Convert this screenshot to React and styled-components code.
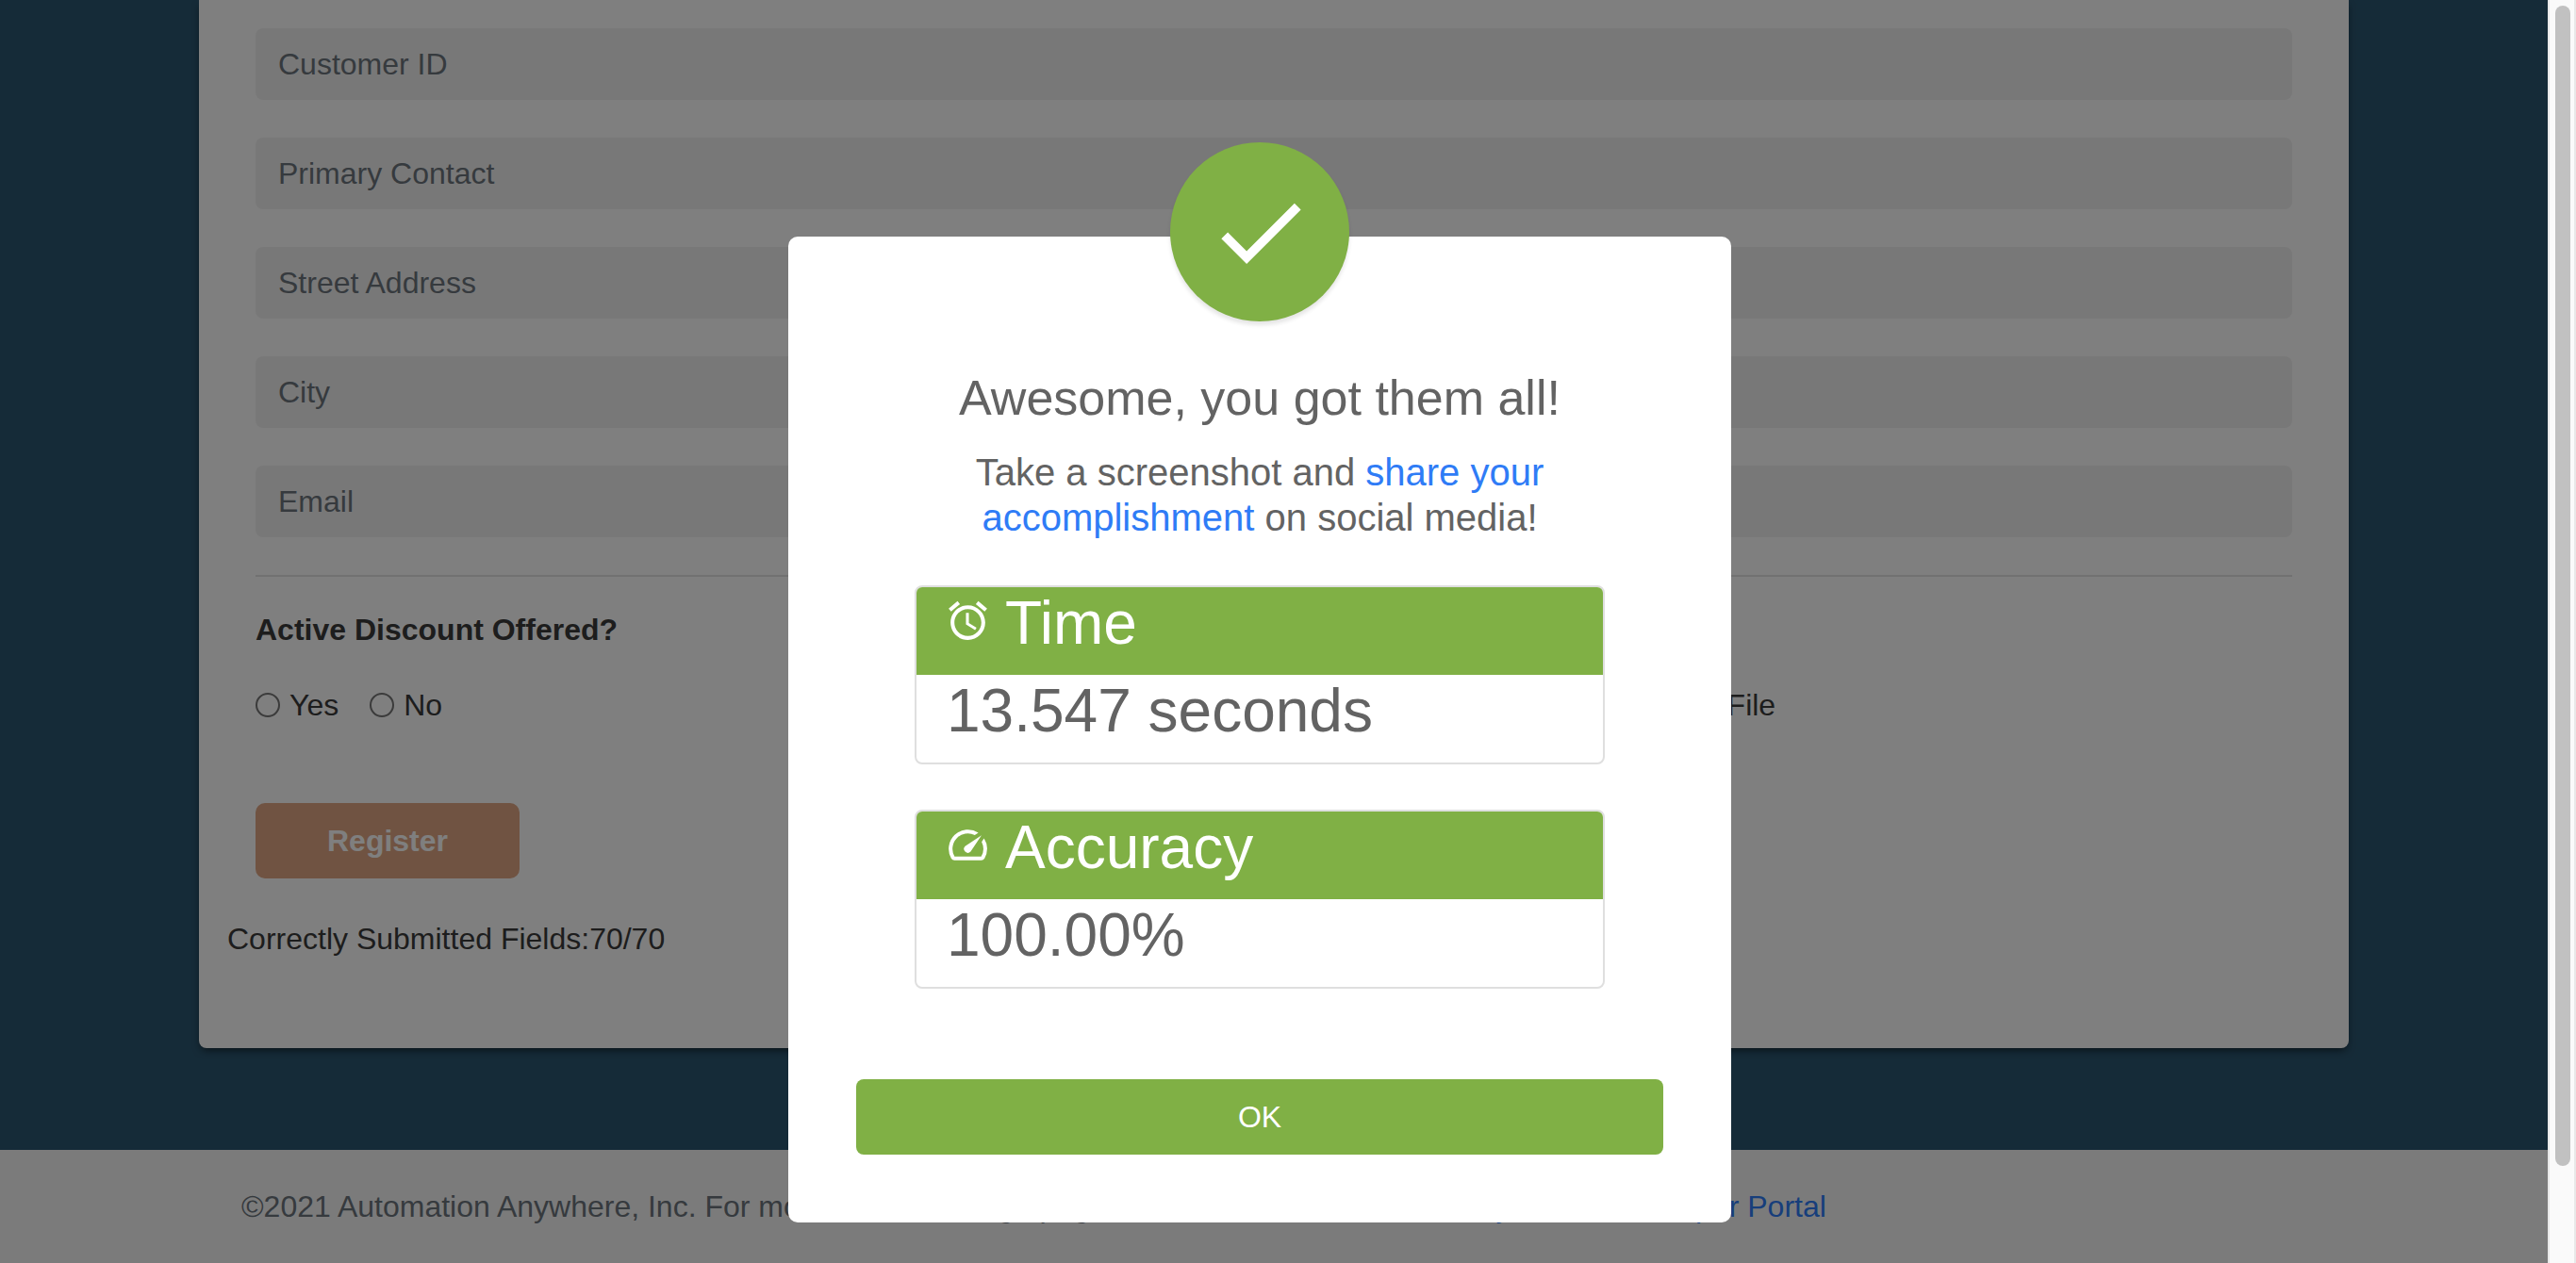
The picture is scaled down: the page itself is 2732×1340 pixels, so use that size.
import React from "react";
import styled, { createGlobalStyle } from "styled-components";

const GlobalStyle = createGlobalStyle`
  *, *::before, *::after { box-sizing: border-box; }
  body {
    margin: 0;
    font-family: "Liberation Sans", Arial, Helvetica, sans-serif;
    font-size: 32px;
    line-height: 48px;
    color: #3a3a3a;
  }
`;

const Screen = styled.div`
  display: grid;
  grid-template-columns: 1fr 30px;
  height: 100vh;
  overflow: hidden;
`;

const Viewport = styled.div`
  position: relative;
  overflow: hidden;
  display: flex;
  flex-direction: column;
`;

const Page = styled.main`
  background: #2b5670;
  padding: 0 60px 108px;
`;

const Card = styled.section`
  max-width: 2280px;
  margin: 0 auto;
  padding: 30px 30px 92px;
  background: #fff;
  border-radius: 0 0 8px 8px;
  box-shadow: 0 4px 8px -2px rgba(0, 0, 0, 0.6);
`;

const Form = styled.form`
  padding: 0 30px;
`;

const Fields = styled.div`
  display: flex;
  flex-direction: column;
  gap: 40px;
`;

const TextField = styled.input`
  width: 100%;
  height: 76px;
  padding: 0 24px;
  border: 0;
  border-radius: 8px;
  background: #f1f1f1;
  font: inherit;
  color: #495057;

  &::placeholder {
    color: #6c757d;
    opacity: 1;
  }
`;

const Divider = styled.hr`
  height: 2px;
  margin: 40px 0 32px;
  border: 0;
  background: #e3e3e3;
`;

const Question = styled.div`
  display: grid;
  grid-template-columns: 2fr 1fr;
  align-items: end;
`;

const OptionGroup = styled.fieldset`
  margin: 0;
  padding: 0;
  border: 0;
`;

const GroupTitle = styled.legend`
  margin-bottom: 32px;
  padding: 0;
  font-weight: 700;
`;

const Options = styled.div`
  display: flex;
  gap: 33px;
  padding-left: ${(p) => (p.$indent ? "33px" : "0")};
`;

const Option = styled.label`
  display: flex;
  align-items: center;
  gap: 10px;
`;

const Tick = styled.input`
  appearance: none;
  width: 26px;
  height: 26px;
  margin: 0;
  border: 2px solid #767676;
  border-radius: ${(p) => (p.type === "radio" ? "50%" : "4px")};
  background: #fff;
`;

const RegisterButton = styled.button`
  display: block;
  width: 280px;
  height: 80px;
  margin: 80px 0 40px;
  border: 0;
  border-radius: 10px;
  background: #e0a785;
  color: #fff;
  font: inherit;
  font-weight: 700;
`;

const Result = styled.p`
  margin: 0;
`;

const Footer = styled.footer`
  flex: 1;
  padding: 36px 60px;
  border-bottom: 1px solid #ececec;
  background: #f7f7f7;
  color: #6c757d;
  white-space: nowrap;
`;

const FooterInner = styled.div`
  max-width: 2280px;
  margin: 0 auto;
  padding: 0 45px;
`;

const Link = styled.a`
  color: #2f7cf6;
  text-decoration: none;
`;

const Backdrop = styled.div`
  position: absolute;
  inset: 0;
  display: flex;
  justify-content: center;
  align-items: flex-start;
  padding: 251px 30px 0 0;
  background: rgba(0, 0, 0, 0.5);
`;

const Dialog = styled.div`
  position: relative;
  width: 1000px;
  padding: 140px 72px 72px;
  border-radius: 10px;
  background: #fff;
  color: #636363;
`;

const Badge = styled.div`
  position: absolute;
  top: -100px;
  left: 50%;
  width: 190px;
  height: 190px;
  margin-left: -95px;
  display: grid;
  place-items: center;
  border-radius: 50%;
  background: #80b045;
  color: #fff;
  box-shadow: 0 4px 4px rgba(0, 0, 0, 0.1);
`;

const DialogTitle = styled.h1`
  margin: 0;
  font-size: 52px;
  line-height: 62px;
  font-weight: 400;
  text-align: center;
`;

const Message = styled.p`
  max-width: 640px;
  margin: 24px auto 48px;
  font-size: 40px;
  line-height: 48px;
  text-align: center;
`;

const Stats = styled.div`
  display: flex;
  flex-direction: column;
  gap: 48px;
  padding: 0 62px;
`;

const StatCard = styled.section`
  overflow: hidden;
  border: 2px solid #dfdfdf;
  border-radius: 8px;
`;

const StatTitle = styled.h2`
  display: flex;
  align-items: flex-start;
  gap: 15px;
  height: 93px;
  margin: 0;
  padding: 0 30px;
  background: #80b045;
  color: #fff;
  font-size: 64px;
  line-height: 77px;
  font-weight: 400;

  svg {
    margin-top: 11px;
  }
`;

const StatValue = styled.p`
  height: 93px;
  margin: 0;
  padding: 0 32px;
  font-size: 64px;
  line-height: 77px;
`;

const OkButton = styled.button`
  display: block;
  width: 100%;
  height: 80px;
  margin-top: 96px;
  border: 0;
  border-radius: 8px;
  background: #80b045;
  color: #fff;
  font: inherit;
`;

const Track = styled.div`
  display: flex;
  padding: 6px 4px 0 6px;
  border: solid #e8e8e8;
  border-width: 0 2px;
  background: #fafafa;
`;

const Thumb = styled.div`
  width: 16px;
  height: 92.3%;
  border-radius: 8px;
  background: #c1c1c1;
`;

const CheckIcon = () => (
  <svg width="115" height="115" viewBox="0 0 24 24" fill="currentColor" aria-hidden="true">
    <path d="M9 16.17 4.83 12l-1.42 1.41L9 19 21 7l-1.41-1.41z" />
  </svg>
);

const AlarmIcon = () => (
  <svg width="49" height="49" viewBox="0 0 24 24" fill="currentColor" aria-hidden="true">
    <path d="M22 5.72l-4.6-3.86-1.29 1.53 4.6 3.86L22 5.72zM7.88 3.39L6.6 1.86 2 5.71l1.29 1.53 4.59-3.85zM12.5 8H11v6l4.75 2.85.75-1.23-4-2.37V8zM12 4c-4.97 0-9 4.03-9 9s4.02 9 9 9c4.97 0 9-4.03 9-9s-4.03-9-9-9zm0 16c-3.87 0-7-3.13-7-7s3.13-7 7-7 7 3.13 7 7-3.13 7-7 7z" />
  </svg>
);

const SpeedIcon = () => (
  <svg width="49" height="49" viewBox="0 0 24 24" fill="currentColor" aria-hidden="true">
    <path d="M20.38 8.57l-1.23 1.85a8 8 0 0 1-.22 7.58H5.07A8 8 0 0 1 15.58 6.85l1.85-1.23A10 10 0 0 0 3.35 19a2 2 0 0 0 1.72 1h13.85a2 2 0 0 0 1.74-1 10 10 0 0 0-.27-10.44zm-9.79 6.84a2 2 0 0 0 2.83 0l5.66-8.49-8.49 5.66a2 2 0 0 0 0 2.83z" />
  </svg>
);

const fields = ["Customer ID", "Primary Contact", "Street Address", "City", "Email"];

const stats = [
  { title: "Time", value: "13.547 seconds", Icon: AlarmIcon },
  { title: "Accuracy", value: "100.00%", Icon: SpeedIcon },
];

export default function App() {
  return (
    <Screen>
      <GlobalStyle />
      <Viewport>
        <Page>
          <Card>
            <Form>
              <Fields>
                {fields.map((name) => (
                  <TextField key={name} type="text" placeholder={name} aria-label={name} />
                ))}
              </Fields>
              <Divider />
              <Question>
                <OptionGroup>
                  <GroupTitle>Active Discount Offered?</GroupTitle>
                  <Options>
                    <Option>
                      <Tick type="radio" name="discount" />
                      Yes
                    </Option>
                    <Option>
                      <Tick type="radio" name="discount" />
                      No
                    </Option>
                  </Options>
                </OptionGroup>
                <Options $indent>
                  <Option>
                    <Tick type="checkbox" />
                    On File
                  </Option>
                </Options>
              </Question>
              <RegisterButton type="button">Register</RegisterButton>
            </Form>
            <Result>Correctly Submitted Fields:70/70</Result>
          </Card>
        </Page>
        <Footer>
          <FooterInner>
            ©2021 Automation Anywhere, Inc. For more RPA challenge pages and visit our{" "}
            <Link href="#portal">Automation Anywhere Developer Portal</Link>
          </FooterInner>
        </Footer>
        <Backdrop>
          <Dialog role="dialog" aria-labelledby="dialog-title">
            <Badge>
              <CheckIcon />
            </Badge>
            <DialogTitle id="dialog-title">Awesome, you got them all!</DialogTitle>
            <Message>
              Take a screenshot and <Link href="#share">share your accomplishment</Link> on social media!
            </Message>
            <Stats>
              {stats.map(({ title, value, Icon }) => (
                <StatCard key={title}>
                  <StatTitle>
                    <Icon />
                    {title}
                  </StatTitle>
                  <StatValue>{value}</StatValue>
                </StatCard>
              ))}
            </Stats>
            <OkButton type="button">OK</OkButton>
          </Dialog>
        </Backdrop>
      </Viewport>
      <Track>
        <Thumb />
      </Track>
    </Screen>
  );
}
